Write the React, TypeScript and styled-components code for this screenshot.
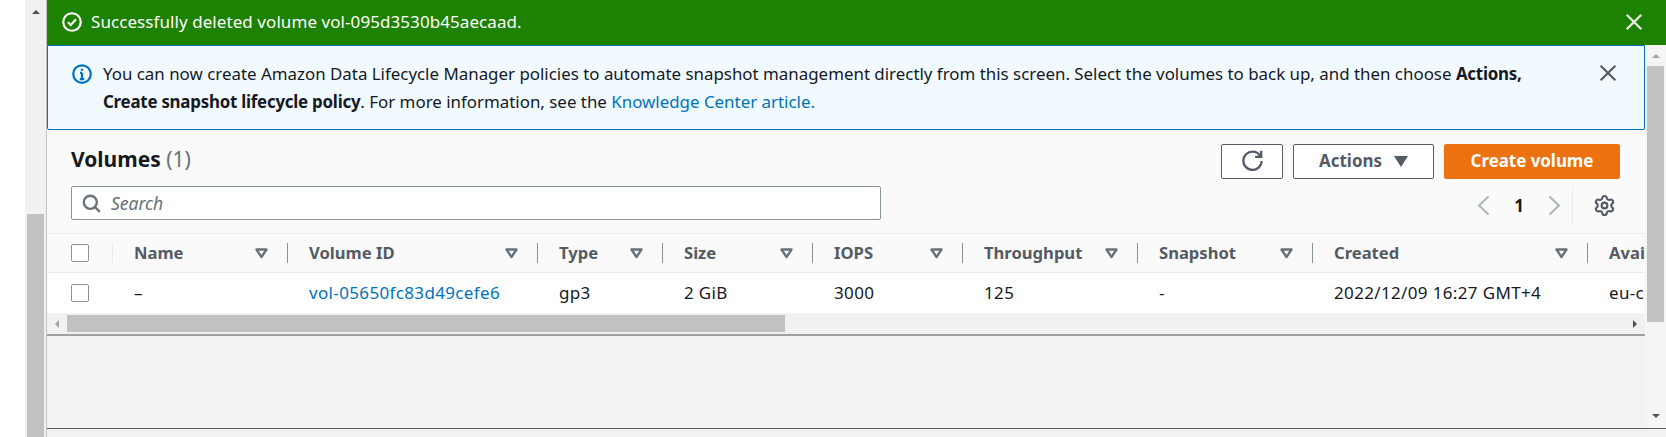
import React from 'react';
import styled, { createGlobalStyle } from 'styled-components';
import { Settings } from 'lucide-react';

const GlobalStyle = createGlobalStyle`
  html, body {
    margin: 0;
    padding: 0;
    background: #fff;
    overflow: hidden;
  }
  body {
    font-family: "Noto Sans", "Open Sans", sans-serif;
    color: #16191f;
  }
`;

const Page = styled.div`
  display: flex;
  width: 1666px;
  height: 437px;
  overflow: hidden;
  padding-left: 25px;
  box-sizing: border-box;
`;

const LeftBar = styled.div`
  width: 21px;
  flex: none;
  display: flex;
  flex-direction: column;
  align-items: center;
  background: #f1f1f1;
  border-right: 1px solid #c4c4c4;
`;

const ArrowSlot = styled.div<{ $height?: number }>`
  flex: none;
  height: ${(p) => p.$height ?? 17}px;
  display: flex;
  align-items: center;
  justify-content: center;
`;

const Arrow = styled.span<{ $dir: 'up' | 'down' | 'left' | 'right'; $color?: string }>`
  width: 0;
  height: 0;
  border-style: solid;
  border-color: transparent;
  ${(p) => {
    const c = p.$color ?? '#505050';
    if (p.$dir === 'up') return `border-width: 0 4px 4px 4px; border-bottom-color: ${c};`;
    if (p.$dir === 'down') return `border-width: 4px 4px 0 4px; border-top-color: ${c};`;
    if (p.$dir === 'left') return `border-width: 4px 4px 4px 0; border-right-color: ${c};`;
    return `border-width: 4px 0 4px 4px; border-left-color: ${c};`;
  }}
`;

const LeftThumb = styled.div`
  width: 17px;
  flex: none;
  height: 223px;
  margin-top: 190px;
  background: #c1c1c1;
`;

const Content = styled.div`
  flex: 1;
  min-width: 0;
  display: flex;
  flex-direction: column;
`;

const Flash = styled.div`
  flex: none;
  height: 45px;
  background: #1d8102;
  color: #fff;
  display: flex;
  align-items: center;
  box-sizing: border-box;
  padding: 0 23px 2px 15px;
  font-size: 17px;
  letter-spacing: 0.07px;
`;

const FlashText = styled.span`
  flex: 1;
  margin-left: 9px;
`;

const Middle = styled.div`
  flex: none;
  height: 384px;
  box-sizing: border-box;
  display: flex;
  background: #f2f3f3;
  border-bottom: 1px solid #545b64;
`;

const Main = styled.div`
  flex: 1;
  min-width: 0;
  display: flex;
  flex-direction: column;
`;

const InfoBox = styled.div`
  flex: none;
  height: 85px;
  box-sizing: border-box;
  background: #f1faff;
  border: 1px solid #0073bb;
  border-radius: 0 0 2px 2px;
  display: flex;
  padding: 14px 27px 0 24px;
`;

const InfoIcon = styled.div`
  flex: none;
  width: 20px;
  height: 20px;
  margin: 4px 11px 0 0;
`;

const InfoText = styled.div`
  flex: 1;
  font-size: 16.9px;
  line-height: 28px;
  white-space: nowrap;
`;

const Strong = styled.b`
  letter-spacing: -0.24px;
`;

const Link = styled.a`
  color: #0073bb;
  text-decoration: none;
`;

const IconBtn = styled.button`
  flex: none;
  border: 0;
  padding: 0;
  background: none;
  display: flex;
`;

const InfoClose = styled(IconBtn)`
  margin-top: 4px;
`;

const Toolbar = styled.div`
  flex: none;
  height: 104px;
  background: #fafafa;
  box-sizing: border-box;
  border-bottom: 1px solid #eaeded;
  padding: 14px 25px 0 24px;
  display: grid;
  grid-template-columns: 1fr auto;
  grid-template-rows: 35px 33px;
  row-gap: 7px;
`;

const Title = styled.h2`
  margin: 0;
  font-size: 21px;
  font-weight: 700;
  line-height: 30px;
`;

const Counter = styled.span`
  font-weight: 400;
  color: #687078;
`;

const Actions = styled.div`
  display: flex;
  gap: 10px;
`;

const Button = styled.button<{ $width: number; $primary?: boolean }>`
  width: ${(p) => p.$width}px;
  height: 35px;
  box-sizing: border-box;
  border-radius: 2px;
  border: 1px solid ${(p) => (p.$primary ? '#ec7211' : '#545b64')};
  background: ${(p) => (p.$primary ? '#ec7211' : '#fff')};
  color: ${(p) => (p.$primary ? '#fff' : '#545b64')};
  font-family: inherit;
  font-size: 16.9px;
  font-weight: 700;
  display: flex;
  align-items: center;
  justify-content: center;
  gap: 12px;
  padding: 0 0 2px;
`;

const SearchBox = styled.div`
  width: 810px;
  height: 34px;
  box-sizing: border-box;
  border: 1px solid #879596;
  border-radius: 2px;
  background: #fff;
  display: flex;
  align-items: center;
  padding-left: 10px;
  gap: 10px;
`;

const SearchHint = styled.span`
  font-size: 17.5px;
  font-style: italic;
  color: #687078;
`;

const Pager = styled.div`
  display: flex;
  align-items: center;
  justify-content: flex-end;
  height: 38px;
  margin-right: 4px;
`;

const PageNo = styled.span`
  font-size: 17px;
  font-weight: 700;
  width: 58px;
  text-align: center;
  color: #16191f;
`;

const PagerDivider = styled.div`
  width: 1px;
  height: 38px;
  background: #eaeded;
  margin: 0 20px 0 11px;
`;

const TableWrap = styled.div`
  flex: none;
  overflow: hidden;
`;

const Table = styled.table`
  table-layout: fixed;
  border-collapse: collapse;
  width: 1676px;
`;

const HeadCell = styled.th`
  height: 38px;
  padding: 0;
  background: #fafafa;
  border-bottom: 1px solid #eaeded;
  text-align: left;
`;

const HeadInner = styled.div`
  height: 20px;
  display: flex;
  align-items: center;
  justify-content: space-between;
  padding: 0 18px 0 21px;
  border-right: 1px solid #879596;
  font-size: 16.6px;
  font-weight: 700;
  color: #545b64;
  white-space: nowrap;
`;

const HeadLabel = styled.span`
  margin-bottom: 2px;
`;

const Cell = styled.td`
  height: 40px;
  padding: 0 0 2px 21px;
  box-sizing: border-box;
  background: #fff;
  font-size: 17px;
  letter-spacing: 0.35px;
  white-space: nowrap;
  overflow: hidden;
`;

const SelectCell = styled.td`
  height: 40px;
  padding: 0 0 0 24px;
  background: #fff;
`;

const Check = styled.div`
  width: 16px;
  height: 16px;
  border: 1px solid #879596;
  border-radius: 2px;
  background: #fff;
`;

const SelectHead = styled.div`
  height: 20px;
  display: flex;
  align-items: center;
  padding-left: 24px;
  border-right: 1px solid #eaeded;
`;

const HScroll = styled.div`
  flex: none;
  height: 21px;
  display: flex;
  align-items: center;
  background: #f1f1f1;
  border-bottom: 2px solid #9aa0a3;
`;

const HArrow = styled.div`
  flex: none;
  width: 20px;
  display: flex;
  align-items: center;
  justify-content: center;
`;

const HThumb = styled.div`
  flex: none;
  width: 718px;
  height: 17px;
  background: #c1c1c1;
`;

const HRest = styled.div`
  flex: 1;
`;

const RightBar = styled.div`
  flex: none;
  width: 21px;
  display: flex;
  flex-direction: column;
  align-items: center;
  background: #f5f5f5;
`;

const RightThumb = styled.div`
  flex: none;
  width: 17px;
  height: 256px;
  background: #c1c1c1;
`;

const Grow = styled.div`
  flex: 1;
`;

const Strip = styled.div`
  flex: 1;
  background: #f2f3f3;
`;

function CheckCircle() {
  return (
    <svg width="20" height="20" viewBox="0 0 16 16" fill="none" stroke="#fff" strokeWidth="1.7">
      <circle cx="8" cy="8" r="7" />
      <path d="M4.8 8.2 7 10.4l4.2-4.6" />
    </svg>
  );
}

function InfoCircle() {
  return (
    <svg width="20" height="20" viewBox="0 0 16 16" fill="none" stroke="#0073bb" strokeWidth="1.8">
      <circle cx="8" cy="8" r="7" />
      <path d="M8 7v5M6.2 12h3.6M6.4 7H8" />
      <path d="M8 3.8v1.6" strokeWidth="2" />
    </svg>
  );
}

function Close({ color, size }: { color: string; size: number }) {
  return (
    <svg width={size} height={size} viewBox="0 0 16 16" fill="none" stroke={color} strokeWidth="2">
      <path d="M1.5 1.5l13 13M14.5 1.5l-13 13" />
    </svg>
  );
}

function SortIcon() {
  return (
    <svg width="15" height="13" viewBox="0 0 15 13" fill="none" stroke="#687078" strokeWidth="2.4">
      <path d="M2.5 2.5h10L7.5 10z" strokeLinejoin="round" />
    </svg>
  );
}

function Refresh() {
  return (
    <svg width="21" height="21" viewBox="0 0 16 16" fill="none" stroke="#545b64" strokeWidth="1.8">
      <path d="M10 5.2h4.6V.6" />
      <path d="M15 8.4A7 7 0 1 1 8 1.2c2.8 0 5 1.5 6.2 3.8" />
    </svg>
  );
}

function Caret() {
  return (
    <svg width="14" height="12" viewBox="0 0 14 12" fill="#545b64">
      <path d="M0 1h14L7 12z" />
    </svg>
  );
}

function Magnifier() {
  return (
    <svg width="19" height="19" viewBox="0 0 16 16" fill="none" stroke="#687078" strokeWidth="2">
      <circle cx="7" cy="7" r="5.5" />
      <path d="M11 11l4 4" />
    </svg>
  );
}

const ChevronIcon = styled.svg<{ $flip?: boolean }>`
  flex: none;
  transform: ${(p) => (p.$flip ? 'scaleX(-1)' : 'none')};
`;

function Chevron({ flip }: { flip?: boolean }) {
  return (
    <ChevronIcon $flip={flip} width="13" height="21" viewBox="0 0 13 21" fill="none" stroke="#aab7b8" strokeWidth="2">
      <path d="M11.5 1.5 2 10.5l9.5 9" />
    </ChevronIcon>
  );
}

const columns = [
  { title: 'Name', width: 175, value: '–' },
  { title: 'Volume ID', width: 250, value: 'vol-05650fc83d49cefe6', link: true },
  { title: 'Type', width: 125, value: 'gp3' },
  { title: 'Size', width: 150, value: '2 GiB' },
  { title: 'IOPS', width: 150, value: '3000' },
  { title: 'Throughput', width: 175, value: '125' },
  { title: 'Snapshot', width: 175, value: '-' },
  { title: 'Created', width: 275, value: '2022/12/09 16:27 GMT+4' },
  { title: 'Availability Zone', width: 200, value: 'eu-central-1a' },
];

export default function App() {
  return (
    <>
      <GlobalStyle />
      <Page>
        <LeftBar>
          <ArrowSlot $height={24}>
            <Arrow $dir="up" />
          </ArrowSlot>
          <LeftThumb />
        </LeftBar>
        <Content>
          <Flash>
            <CheckCircle />
            <FlashText>Successfully deleted volume vol-095d3530b45aecaad.</FlashText>
            <IconBtn>
              <Close color="#e8efe6" size={18} />
            </IconBtn>
          </Flash>
          <Middle>
            <Main>
              <InfoBox>
                <InfoIcon>
                  <InfoCircle />
                </InfoIcon>
                <InfoText>
                  You can now create Amazon Data Lifecycle Manager policies to automate snapshot management directly from this screen. Select the volumes to back up, and then choose <Strong>Actions,</Strong>
                  <br />
                  <Strong>Create snapshot lifecycle policy</Strong>. For more information, see the <Link>Knowledge Center article.</Link>
                </InfoText>
                <InfoClose>
                  <Close color="#545b64" size={18} />
                </InfoClose>
              </InfoBox>
              <Toolbar>
                <Title>
                  Volumes <Counter>(1)</Counter>
                </Title>
                <Actions>
                  <Button $width={62}>
                    <Refresh />
                  </Button>
                  <Button $width={141}>
                    Actions
                    <Caret />
                  </Button>
                  <Button $width={176} $primary>
                    Create volume
                  </Button>
                </Actions>
                <SearchBox>
                  <Magnifier />
                  <SearchHint>Search</SearchHint>
                </SearchBox>
                <Pager>
                  <Chevron />
                  <PageNo>1</PageNo>
                  <Chevron flip />
                  <PagerDivider />
                  <Settings size={23} color="#545b64" strokeWidth={2.2} />
                </Pager>
              </Toolbar>
              <TableWrap>
                <Table>
                  <colgroup>
                    <col width={66} />
                    {columns.map((c) => (
                      <col key={c.title} width={c.width} />
                    ))}
                  </colgroup>
                  <thead>
                    <tr>
                      <HeadCell>
                        <SelectHead>
                          <Check />
                        </SelectHead>
                      </HeadCell>
                      {columns.map((c) => (
                        <HeadCell key={c.title}>
                          <HeadInner>
                            <HeadLabel>{c.title}</HeadLabel>
                            <SortIcon />
                          </HeadInner>
                        </HeadCell>
                      ))}
                    </tr>
                  </thead>
                  <tbody>
                    <tr>
                      <SelectCell>
                        <Check />
                      </SelectCell>
                      {columns.map((c) => (
                        <Cell key={c.title}>{c.link ? <Link>{c.value}</Link> : c.value}</Cell>
                      ))}
                    </tr>
                  </tbody>
                </Table>
              </TableWrap>
              <HScroll>
                <HArrow>
                  <Arrow $dir="left" $color="#a3a3a3" />
                </HArrow>
                <HThumb />
                <HRest />
                <HArrow>
                  <Arrow $dir="right" />
                </HArrow>
              </HScroll>
            </Main>
            <RightBar>
              <ArrowSlot $height={21}>
                <Arrow $dir="up" $color="#a3a3a3" />
              </ArrowSlot>
              <RightThumb />
              <Grow />
              <ArrowSlot $height={24}>
                <Arrow $dir="down" />
              </ArrowSlot>
            </RightBar>
          </Middle>
          <Strip />
        </Content>
      </Page>
    </>
  );
}
